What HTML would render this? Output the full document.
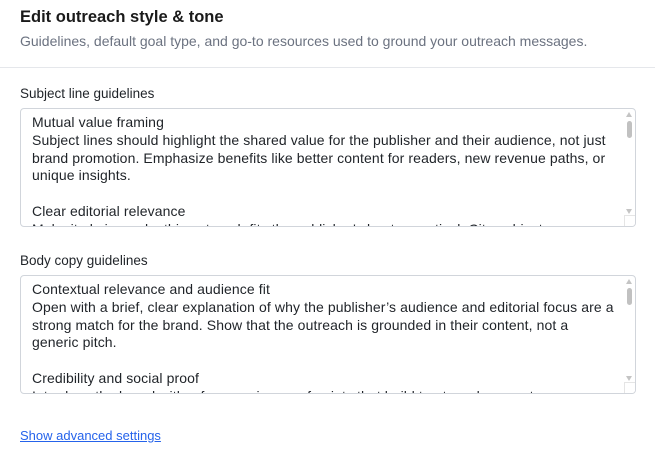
<!DOCTYPE html>
<html><head><style>
html,body{margin:0;padding:0;background:#fff;width:655px;height:457px;overflow:hidden;font-family:"Liberation Sans",Arial,sans-serif;color:#1f2328}
.h{position:absolute;left:20px;top:8px;font-size:16.5px;font-weight:600;color:#1a1a1a}
.s{position:absolute;left:20px;top:33px;font-size:14px;color:#6b7280}
.d{position:absolute;left:0;top:67px;width:655px;height:1px;background:#e5e7eb}
.l{position:absolute;left:20px;font-size:13.5px;font-weight:500;color:#1f2328}
.ta{position:absolute;left:20px;width:616px;height:119px;border:1px solid #d1d5db;border-radius:4px;overflow:hidden;box-sizing:border-box}
.tx{position:absolute;left:11px;top:5px;width:592px;font-size:14px;line-height:17.8px;color:#1f2328;white-space:pre;letter-spacing:0.1px}
.up{position:absolute;right:3px;top:3px;width:0;height:0;border-left:3px solid transparent;border-right:3px solid transparent;border-bottom:5px solid #c4c4c4}
.dn{position:absolute;right:3px;bottom:12px;width:0;height:0;border-left:3px solid transparent;border-right:3px solid transparent;border-top:5px solid #c4c4c4}
.th{position:absolute;right:3px;top:12px;width:5px;height:17px;border-radius:3px;background:#c1c1c1}
.rz{position:absolute;right:0;bottom:0;width:10px;height:10px;border-left:1px solid #e5e5e5;border-top:1px solid #e5e5e5;background:#fff}
.a{position:absolute;left:20px;top:428px;font-size:13px;color:#2563eb;text-decoration:underline}
</style></head><body>
<div class="h">Edit outreach style &amp; tone</div>
<div class="s">Guidelines, default goal type, and go-to resources used to ground your outreach messages.</div>
<div class="d"></div>
<div class="l" style="top:86px">Subject line guidelines</div>
<div class="ta" style="top:108px"><div class="tx">Mutual value framing
Subject lines should highlight the shared value for the publisher and their audience, not just
brand promotion. Emphasize benefits like better content for readers, new revenue paths, or
unique insights.

Clear editorial relevance
Make it obvious why this outreach fits the publisher's beat or vertical. Cite subject</div><div class="up"></div><div class="th"></div><div class="dn"></div><div class="rz"></div></div>
<div class="l" style="top:253px">Body copy guidelines</div>
<div class="ta" style="top:275px"><div class="tx">Contextual relevance and audience fit
Open with a brief, clear explanation of why the publisher’s audience and editorial focus are a
strong match for the brand. Show that the outreach is grounded in their content, not a
generic pitch.

Credibility and social proof
Introduce the brand with a few concise proof points that build trust, such as customer</div><div class="up"></div><div class="th"></div><div class="dn"></div><div class="rz"></div></div>
<div class="a">Show advanced settings</div>
</body></html>
